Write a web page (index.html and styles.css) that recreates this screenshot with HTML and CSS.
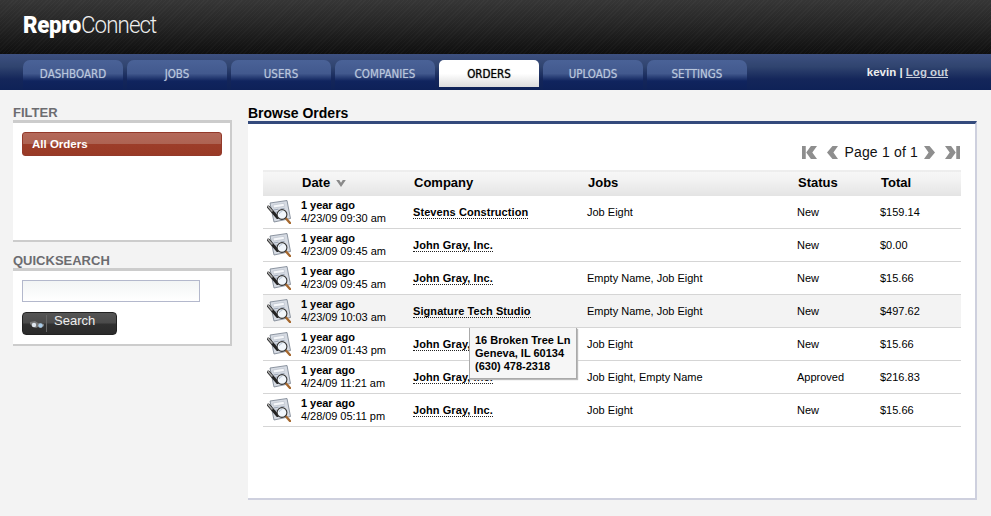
FILE: index.html
```html
<!DOCTYPE html>
<html lang="en">
<head>
<meta charset="utf-8">
<title>ReproConnect - Browse Orders</title>
<link rel="stylesheet" href="styles.css">
</head>
<body>
<svg class="defs" width="0" height="0" aria-hidden="true">
  <symbol id="order" viewBox="0 0 24 24">
    <path d="M3 3 20 .5 23.500 18.500 7 22z" fill="#d6dbe3" stroke="#737d8b" stroke-width=".8"/>
    <path d="M6 5l11-1.700.5 3-11 1.700z" fill="#f5f7fa" stroke="#aab2bf" stroke-width=".5"/>
    <path d="M6.500 10l5-.8M13.500 9l4-.6M7 12.500l3-.5" stroke="#8c97a8" stroke-width=".8"/>
    <path d="M1.500 7 10.500 17.500" stroke="#222" stroke-width="3" stroke-linecap="round"/>
    <path d="M1.200 6.500 5 11" stroke="#a8a8a8" stroke-width="1.600" stroke-linecap="round"/>
    <path d="M19 18.500 23 23" stroke="#a5682f" stroke-width="2.400" stroke-linecap="round"/>
    <circle cx="15" cy="14.500" r="4.900" fill="#f1f6fb" stroke="#333" stroke-width="1.100"/>
    <path d="M12.300 14a3 3 0 0 1 3-2.600" fill="none" stroke="#b9c7d8" stroke-width="1"/>
  </symbol>
</svg>

<header class="masthead">
  <div class="logo"><b>Repro</b><span>Connect</span></div>
</header>

<nav class="navbar">
  <ul class="tabs">
    <li class="tab">DASHBOARD</li>
    <li class="tab">JOBS</li>
    <li class="tab">USERS</li>
    <li class="tab">COMPANIES</li>
    <li class="tab active">ORDERS</li>
    <li class="tab">UPLOADS</li>
    <li class="tab">SETTINGS</li>
  </ul>
  <div class="user">kevin | <a href="#">Log out</a></div>
</nav>

<div class="content">
  <aside class="sidebar">
    <h2 class="side-title">FILTER</h2>
    <section class="panel filter-panel">
      <a class="filter-btn" href="#">All Orders</a>
    </section>
    <h2 class="side-title second">QUICKSEARCH</h2>
    <section class="panel search-panel">
      <input class="search-input" type="text" aria-label="Search">
      <button class="search-btn" type="button">
        <span class="search-ico">
          <svg width="16" height="9" viewBox="0 0 16 9"><path d="M1 2 6 1l3 2 6 1v2l-3 2-3-1-2 1-3-1-3-3z" fill="#777"/><circle cx="5" cy="5" r="2.200" fill="#dfe6ee"/><circle cx="11.500" cy="5.500" r="2.200" fill="#a9cbe6"/></svg>
        </span>
        <span class="search-label">Search</span>
      </button>
    </section>
  </aside>

  <main class="main">
    <h1 class="main-title">Browse Orders</h1>
    <section class="main-panel">
      <div class="pager">
        <svg class="pg pg-edge" viewBox="0 0 16 16"><path d="M0 1h4v14H0zM4.500 8l5-7H16l-5 7 5 7H9.500z" fill="#8e8e8e"/></svg>
        <svg class="pg pg-step" viewBox="0 0 12 16"><path d="M0 8l6-7h6L7 8l5 7H6z" fill="#8e8e8e"/></svg>
        <span class="pg-text">Page 1 of 1</span>
        <svg class="pg pg-step" viewBox="0 0 12 16"><path d="M12 8 6 1H0l5 7-5 7h6z" fill="#8e8e8e"/></svg>
        <svg class="pg pg-edge last" viewBox="0 0 16 16"><path d="M16 1h-4v14h4zM11.500 8l-5-7H0l5 7-5 7h6.500z" fill="#8e8e8e"/></svg>
      </div>
      <div class="table-wrap">
        <table class="orders">
          <thead>
            <tr>
              <th class="c-ico"></th>
              <th class="c-date">Date <svg class="sort" width="10" height="7" viewBox="0 0 11 8"><path d="M0 0h3.500l2 3 2-3H11L5.500 8z" fill="#8a8a8a"/></svg></th>
              <th class="c-co">Company</th>
              <th class="c-jobs">Jobs</th>
              <th class="c-st">Status</th>
              <th class="c-tot">Total</th>
            </tr>
          </thead>
          <tbody>
            <tr><td class="c-ico"><svg class="doc"><use href="#order"/></svg></td><td class="c-date"><b>1 year ago</b><br>4/23/09 09:30 am</td><td class="c-co"><a href="#">Stevens Construction</a></td><td class="c-jobs">Job Eight</td><td class="c-st">New</td><td class="c-tot">$159.14</td></tr>
            <tr><td class="c-ico"><svg class="doc"><use href="#order"/></svg></td><td class="c-date"><b>1 year ago</b><br>4/23/09 09:45 am</td><td class="c-co"><a href="#">John Gray, Inc.</a></td><td class="c-jobs"></td><td class="c-st">New</td><td class="c-tot">$0.00</td></tr>
            <tr><td class="c-ico"><svg class="doc"><use href="#order"/></svg></td><td class="c-date"><b>1 year ago</b><br>4/23/09 09:45 am</td><td class="c-co"><a href="#">John Gray, Inc.</a></td><td class="c-jobs">Empty Name, Job Eight</td><td class="c-st">New</td><td class="c-tot">$15.66</td></tr>
            <tr class="hover"><td class="c-ico"><svg class="doc"><use href="#order"/></svg></td><td class="c-date"><b>1 year ago</b><br>4/23/09 10:03 am</td><td class="c-co"><a href="#">Signature Tech Studio</a></td><td class="c-jobs">Empty Name, Job Eight</td><td class="c-st">New</td><td class="c-tot">$497.62</td></tr>
            <tr><td class="c-ico"><svg class="doc"><use href="#order"/></svg></td><td class="c-date"><b>1 year ago</b><br>4/23/09 01:43 pm</td><td class="c-co"><a href="#">John Gray, Inc.</a></td><td class="c-jobs">Job Eight</td><td class="c-st">New</td><td class="c-tot">$15.66</td></tr>
            <tr><td class="c-ico"><svg class="doc"><use href="#order"/></svg></td><td class="c-date"><b>1 year ago</b><br>4/24/09 11:21 am</td><td class="c-co"><a href="#">John Gray, Inc.</a></td><td class="c-jobs">Job Eight, Empty Name</td><td class="c-st">Approved</td><td class="c-tot">$216.83</td></tr>
            <tr><td class="c-ico"><svg class="doc"><use href="#order"/></svg></td><td class="c-date"><b>1 year ago</b><br>4/28/09 05:11 pm</td><td class="c-co"><a href="#">John Gray, Inc.</a></td><td class="c-jobs">Job Eight</td><td class="c-st">New</td><td class="c-tot">$15.66</td></tr>
          </tbody>
        </table>
        <div class="tooltip">16 Broken Tree Ln<br>Geneva, IL 60134<br>(630) 478-2318</div>
      </div>
    </section>
  </main>
</div>
</body>
</html>
```

FILE: styles.css
```css
* { box-sizing: border-box; }
html, body { margin: 0; height: 516px; overflow: hidden; }
body { background: #f3f3f3; font-family: "Liberation Sans", Arial, sans-serif; color: #000; }
.defs { position: absolute; }

.masthead {
  height: 54px;
  padding: 11px 0 0 23px;
  background:
    repeating-linear-gradient(135deg, rgba(255,255,255,.025) 0 1px, rgba(0,0,0,0) 1px 3px),
    linear-gradient(#363636, #262626 45%, #0f0f0f);
}
.logo { color: #fff; font-size: 24px; line-height: 28px; font-family: Roboto, "Liberation Sans", sans-serif; white-space: nowrap; transform: scaleX(.93); transform-origin: left center; }
.logo b { font-weight: 900; letter-spacing: -.4px; }
.logo span { font-weight: 300; letter-spacing: -1px; color: #eee; }

.navbar {
  height: 36px;
  display: flex;
  justify-content: space-between;
  padding: 6px 43px 0 23px;
  background: linear-gradient(#3d5080, #30446f 35%, #14265a 70%, #0f2257);
}
.tabs { display: flex; gap: 4px; list-style: none; margin: 0; padding: 0; }
.tab {
  width: 100px;
  height: 30px;
  padding-top: 7px;
  text-align: center;
  font-family: "DejaVu Sans", sans-serif;
  font-stretch: condensed;
  font-size: 11.500px;
  font-weight: 400;
  line-height: 14px;
  color: #b9c6dc;
  text-shadow: 0 0 1px rgba(185,198,220,.6);
  border-radius: 7px 7px 0 0;
  background: linear-gradient(#4a6297, #42598e 45%, #10245e 70%, #0e2158);
}
.tab.active {
  height: 27px;
  color: #000;
  text-shadow: 0 0 1px rgba(0,0,0,.7);
  border-radius: 5px 5px 0 0;
  background: linear-gradient(#fff, #fff 50%, #dcdcdc);
}
.user { font-size: 11.500px; font-weight: 700; line-height: 13px; padding-top: 6px; color: #eee; }
.user a { color: #c9cfdb; }

.content { display: flex; align-items: flex-start; padding: 0 14px 0 13px; }
.sidebar { width: 219px; margin-right: 16px; padding-top: 15px; }
.side-title { margin: 0; font-size: 13px; line-height: 15px; font-weight: 700; color: #6c6c70; }
.side-title.second { margin-top: 11px; }
.panel {
  margin-top: 0;
  background: #fff;
  border-top: 3px solid #ccc;
  border-right: 2px solid #ccc;
  border-bottom: 2px solid #ccc;
  padding: 9px;
}
.filter-panel { height: 122px; }
.search-panel { height: 78px; }
.filter-btn {
  display: block;
  width: 200px;
  height: 24px;
  padding-left: 9px;
  font-size: 11.500px;
  font-weight: 700;
  line-height: 23px;
  color: #fff;
  text-decoration: none;
  border-radius: 3px;
  border: 1px solid #93392a;
  background: linear-gradient(#b4695a, #ad6352 50%, #9c3d29 52%, #993a26);
}
.search-input {
  display: block;
  width: 178px;
  height: 22px;
  margin: 0;
  border: 1px solid #b3b8cc;
  background: linear-gradient(#f2f5f5, #fff);
}
.search-btn {
  display: flex;
  width: 95px;
  height: 23px;
  margin-top: 10px;
  padding: 0;
  border: 1px solid #222;
  border-radius: 4px;
  background: linear-gradient(#555, #4b4b4b 45%, #303030 55%, #2a2a2a);
  color: #eee;
  font: 13px/16px "Liberation Sans", sans-serif;
}
.search-ico { width: 24px; height: 17px; margin-top: 2px; padding: 5px 0 0 5px; border-right: 1px solid #666; display: block; line-height: 0; }
.search-label { padding-left: 7px; }

.main { width: 729px; padding-top: 15px; }
.main-title { margin: 0; font-size: 14px; line-height: 16px; font-weight: 700; }
.main-panel {
  height: 379px;
  padding: 20px 15px 0;
  background: #fff;
  border-top: 3px solid #344a7c;
  border-right: 2px solid #ced0de;
  border-bottom: 2px solid #ced0de;
}
.pager { display: flex; justify-content: flex-end; align-items: center; height: 16px; font-size: 14px; margin-bottom: 10px; }
.pg { display: block; height: 15px; flex: none; }
.pg-edge { width: 15px; }
.pg-step { width: 11px; }
.pg-edge + .pg-step { margin-left: 10px; }
.pg-text { margin: 0 6px; line-height: 16px; color: #111; letter-spacing: .18px; }
.pg-step + .last { margin-left: 10px; }

.table-wrap { position: relative; }
.orders { width: 698px; border-collapse: collapse; table-layout: fixed; font-size: 11px; }
.orders th {
  height: 25px;
  padding: 0 0 2px;
  text-align: left;
  font-size: 13px;
  background: linear-gradient(#f7f7f7, #f3f3f3 30%, #e3e3e3);
  border-top: 1px solid #eee;
}
.orders td { height: 33px; padding: 0; line-height: 13px; border-bottom: 1px solid #d5d5d5; vertical-align: middle; }
.orders tbody tr:first-child td:not(.c-date) { padding-top: 1px; }
.orders th:first-child, .orders td:first-child { padding-left: 4px; }
.c-ico { width: 38px; }
.c-date { width: 112px; }
.c-co { width: 174px; }
.c-jobs { width: 210px; }
.c-st { width: 83px; }
.c-tot { width: 81px; }
.orders td.c-date { letter-spacing: -.05px; }
.orders th.c-date { padding-left: 1px; }
.orders th.c-co, .orders th.c-tot { padding-left: 1px; }
.orders th.c-jobs, .orders th.c-st { padding-left: 1px; }
.sort { margin-left: 2px; }
.hover td { background: #f3f3f3; }
.doc { display: block; width: 24px; height: 24px; }
.c-co a { color: #000; font-weight: 700; text-decoration: none; border-bottom: 1px dotted #222; letter-spacing: .08px; }
.c-date b { font-weight: 700; }

.tooltip {
  position: absolute;
  top: 158px;
  left: 206px;
  width: 108px;
  height: 51px;
  padding: 6px 5px;
  font-size: 11px;
  font-weight: 700;
  line-height: 13px;
  white-space: nowrap;
  background: #f6f6f6;
  border: 1px solid #aaa;
  border-width: 0 1px 1px 1px;
  box-shadow: 1px 1px 1px #bbb;
}
```
